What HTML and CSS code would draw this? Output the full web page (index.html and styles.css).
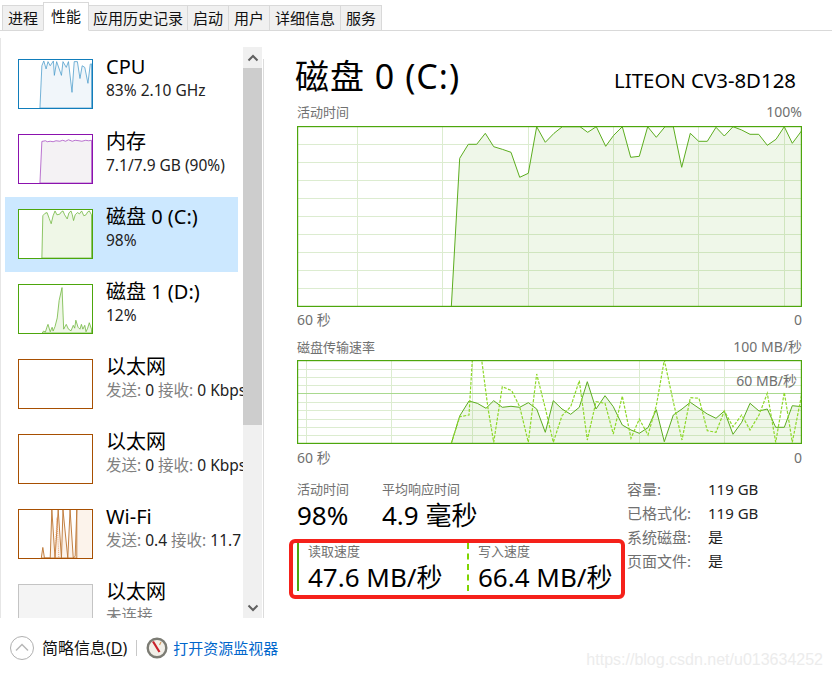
FILE: index.html
```html
<!DOCTYPE html>
<html lang="zh-CN">
<head>
    <meta charset="UTF-8">
    <title>任务管理器</title>
    <link rel="stylesheet" href="styles.css">
</head>
<body>
    <div class="tabs">
        <div class="tab">进程</div>
        <div class="tab active">性能</div>
        <div class="tab tab-wide">应用历史记录</div>
        <div class="tab">启动</div>
        <div class="tab">用户</div>
        <div class="tab">详细信息</div>
        <div class="tab">服务</div>
    </div>

    <div class="content">
        <div class="sidebar">
            <div class="list">
                <div class="item">
                    <svg class="thumb cpu" viewBox="0 0 75 50"><polygon points="21.3,50 23.3,6 25.3,1 27.7,9.3 29.7,1.7 32,6 35.3,1 36.3,16 38.7,1.7 43.7,16 45.3,1.7 48.7,7.7 51,1.7 54.7,33.7 57,1.7 60.3,1.7 63,19.3 65.3,6 68,7.7 71.3,24.3 73.7,4.3 75,4 75,50"/></svg>
                    <div class="item-text"><div class="item-name">CPU</div><div class="item-sub">83% 2.10 GHz</div></div>
                </div>
                <div class="item">
                    <svg class="thumb mem" viewBox="0 0 75 50"><polygon points="21.3,50 23.3,6.7 27,6 29,7 32,6.5 35,7 38,6 42,6.5 45,5.5 48,6.5 51,5 55,6.5 58,5.5 62,6 65,6.5 69,5.5 72,6 75,5.5 75,50"/></svg>
                    <div class="item-text"><div class="item-name">内存</div><div class="item-sub">7.1/7.9 GB (90%)</div></div>
                </div>
                <div class="item selected">
                    <svg class="thumb disk" viewBox="0 0 75 50"><polygon points="23.3,50 24.3,6 26.5,3.5 28.7,2.7 31,9 33,14.3 35,6 37,1 39,5 42,4.3 43.5,2 45.3,1 47,5 49.7,9.3 51.5,3 53.7,1 55,5 56.3,11 58,5 60.3,2.7 62.5,4 64.7,1 67,6 69.3,5 71,2 72.7,1 75,5 75,50"/></svg>
                    <div class="item-text"><div class="item-name">磁盘 0 (C:)</div><div class="item-sub">98%</div></div>
                </div>
                <div class="item">
                    <svg class="thumb disk" viewBox="0 0 75 50"><polygon points="23.7,50 25,48 27,49 28.5,44 29.7,41 32,48.7 34,44 35,48 37,43.3 39.3,34.3 41.3,16 44.3,2.7 46,46 48.7,41 51,46 53.7,47.7 56,42 57.5,45 58.7,36.7 61,44 63,46 64.5,41 66,46 68,42 69.3,48.7 71,45 72.7,39.3 75,46 75,50"/></svg>
                    <div class="item-text"><div class="item-name">磁盘 1 (D:)</div><div class="item-sub">12%</div></div>
                </div>
                <div class="item">
                    <svg class="thumb net" viewBox="0 0 75 50"></svg>
                    <div class="item-text"><div class="item-name">以太网</div><div class="item-sub"><span class="gray">发送:</span> 0 <span class="gray">接收:</span> 0 Kbps</div></div>
                </div>
                <div class="item">
                    <svg class="thumb net" viewBox="0 0 75 50"></svg>
                    <div class="item-text"><div class="item-name">以太网</div><div class="item-sub"><span class="gray">发送:</span> 0 <span class="gray">接收:</span> 0 Kbps</div></div>
                </div>
                <div class="item">
                    <svg class="thumb net" viewBox="0 0 75 50">
                        <rect x="59.7" y="0" width="15.3" height="50" class="wifi-bg"/>
                        <polygon points="22.7,50 24.3,39 26,50 32,50 33.7,0 37,50 40.3,0 43.7,50 45.3,0 50.3,50 52.7,0 56,50 58,48 59.7,0 59.7,50"/>
                        <polyline class="net-dash" points="37,50 39,8 41,50"/>
                    </svg>
                    <div class="item-text"><div class="item-name">Wi-Fi</div><div class="item-sub"><span class="gray">发送:</span> 0.4 <span class="gray">接收:</span> 11.7 Mbps</div></div>
                </div>
                <div class="item">
                    <svg class="thumb off" viewBox="0 0 75 50"></svg>
                    <div class="item-text"><div class="item-name">以太网</div><div class="item-sub gray">未连接</div></div>
                </div>
            </div>
            <div class="scrollbar">
                <div class="scroll-btn"><svg width="12" height="8" viewBox="0 0 12 8"><path d="M1.5 6.5 L6 2 L10.5 6.5" class="scroll-arrow"/></svg></div>
                <div class="scroll-thumb"></div>
                <div class="scroll-rest"></div>
                <div class="scroll-btn"><svg width="12" height="8" viewBox="0 0 12 8"><path d="M1.5 1.5 L6 6 L10.5 1.5" class="scroll-arrow"/></svg></div>
            </div>
            <div class="divider"></div>
        </div>

        <div class="main">
            <div class="header">
                <div class="title">磁盘 0 (C:)</div>
                <div class="model">LITEON CV3-8D128</div>
            </div>

            <div class="chart-label"><span>活动时间</span><span class="chart-end">100%</span></div>
            <svg class="chart chart-big" viewBox="297 126 505 181">
                <path class="grid" d="M297 144.5H802M297 162.5H802M297 180.5H802M297 198.5H802M297 216.5H802M297 234.5H802M297 252.5H802M297 270.5H802M297 288.5H802M357.5 126V307M442.5 126V307M528.5 126V307M613.5 126V307M698.5 126V307M784.5 126V307"/>
                <polygon class="area" points="451.3,307 459.7,158.3 468.3,144.3 476.7,144.3 485.3,133.3 493.7,146.7 502.3,149.3 511,152.3 519.7,177.3 528.3,173.3 536.7,126.7 545.3,142.3 554,133.3 562.3,126.7 580,126.7 587.7,132.3 596.3,126.7 605.7,146.3 613.7,135.3 622.3,126.7 630.7,157.3 639.3,156.3 647.7,126.7 656.3,137.3 665,126.7 673.3,126.7 681.7,167.3 690.3,133.3 698.7,141.3 707.3,141.3 716,127.3 724.3,136 733,126.7 741.7,130 750,134.3 758.7,134.3 767.3,145.3 776,139.3 784.3,126.7 792.3,143.3 801.7,130.7 801.7,307"/>
                <rect class="frame" x="297.5" y="126.5" width="504" height="180"/>
            </svg>
            <div class="chart-caption"><span>60 秒</span><span>0</span></div>

            <div class="chart-label second"><span>磁盘传输速率</span><span class="chart-end">100 MB/秒</span></div>
            <div class="chart-wrap">
                <svg class="chart chart-small" viewBox="297 360 505 84">
                    <path class="grid" d="M297 369.5H802M297 377.5H802M297 385.5H802M297 402.5H802M297 410.5H802M297 419.5H802M297 427.5H802M297 435.5H802M306.5 360V444M391.5 360V444M472.5 360V444M553.5 360V444M639.5 360V444M724.5 360V444"/>
                    <path class="grid-strong" d="M297 393.5H802"/>
                    <polygon class="area" points="451.3,443.5 459.7,416 469,401 477.3,403.3 486,408.3 493.7,400.7 502.3,407.3 511,406.3 519.7,407.3 528.3,402.7 536.7,409 545.3,432.3 553.3,400.7 562,409 570.7,414.3 579.3,407.3 587.3,381.7 596,409 605,395.7 613.3,406.7 622.3,425 631,430 639.3,433.3 648,427.7 656.3,409.7 664.3,441.7 673.3,415 682,409 690.3,402.3 699,408.3 707.3,414 716,418.3 724.3,411 733,434.3 741.7,422.3 750,403.3 759,411 767.3,409 775.7,427.3 784.3,427.3 792.3,405.7 801.7,406.7 801.7,443.5"/>
                    <polyline class="write-line" points="451.3,443.3 459.7,416.7 469,415 472.3,360 481.7,360 488,408.3 493.7,442.3 502.3,386.7 511.7,390.7 519.7,406.7 528.3,442.3 536.7,374 545.3,408.3 553.3,442.3 562,415.7 570.7,406.7 579.3,380.7 587.3,440 596,401.7 605,403.3 613.3,434 622.3,396 631,438.3 639.3,419 648,435 656.3,405.7 664.3,360 673.3,401.7 682,440 690.3,397.7 699,398.3 707.3,430.7 716,432.3 724.3,411 733,426.7 741.7,415 750,430 759,415 767.3,393.3 775.7,442.3 784.3,392.3 792.3,442.3 801.7,394.3"/>
                    <rect class="frame" x="297.5" y="360.5" width="504" height="83"/>
                </svg>
                <div class="chart-mark">60 MB/秒</div>
            </div>
            <div class="chart-caption low"><span>60 秒</span><span>0</span></div>

            <div class="stats">
                <div class="stats-left">
                    <div class="stat-row">
                        <div class="stat stat-active"><div class="stat-label">活动时间</div><div class="stat-value">98%</div></div>
                        <div class="stat"><div class="stat-label">平均响应时间</div><div class="stat-value">4.9 毫秒</div></div>
                    </div>
                    <div class="stat-row speeds">
                        <div class="stat speed read"><div class="stat-label">读取速度</div><div class="stat-value">47.6 MB/秒</div></div>
                        <div class="stat speed write"><div class="stat-label">写入速度</div><div class="stat-value">66.4 MB/秒</div></div>
                        <div class="red-box"></div>
                    </div>
                </div>
                <div class="stats-right">
                    <div class="prop"><span class="prop-key">容量:</span><span>119 GB</span></div>
                    <div class="prop"><span class="prop-key">已格式化:</span><span>119 GB</span></div>
                    <div class="prop"><span class="prop-key">系统磁盘:</span><span>是</span></div>
                    <div class="prop"><span class="prop-key">页面文件:</span><span>是</span></div>
                </div>
            </div>
        </div>
    </div>

    <div class="footer">
        <svg class="less-icon" width="26" height="26" viewBox="0 0 26 26">
            <circle cx="13" cy="13" r="11.5" class="less-ring"/>
            <path d="M7 15.5 L13 9.5 L19 15.5" class="less-arrow"/>
        </svg>
        <div class="less-text">简略信息(<u>D</u>)</div>
        <div class="sep"></div>
        <svg class="mon-icon" width="22" height="22" viewBox="0 0 22 22">
            <circle cx="11" cy="11" r="9.3" class="mon-ring"/>
            <path d="M7 4.5 L13.5 15" class="mon-needle"/>
            <path d="M15 5 L13.5 8" class="mon-tick"/>
        </svg>
        <div class="mon-link">打开资源监视器</div>
        <div class="watermark">https://blog.csdn.net/u013634252</div>
    </div>
</body>
</html>
```

FILE: styles.css
```css
* {
    box-sizing: border-box;
}

html, body {
    margin: 0;
    height: 678px;
    overflow: hidden;
}

body {
    font-family: "Noto Sans", "Noto Sans CJK SC", sans-serif;
    background-color: #fff;
    color: #000;
    position: relative;
}

/* tab strip */
.tabs {
    display: flex;
    align-items: flex-end;
    height: 31px;
    padding-left: 2px;
    border-bottom: 1px solid #d9d9d9;
}
.tab {
    height: 26px;
    margin-bottom: -1px;
    margin-right: -1px;
    padding: 0 5px;
    font-size: 15px;
    line-height: 24px;
    color: #111;
    background-color: #f0f0f0;
    border: 1px solid #d9d9d9;
}
.tab-wide {
    padding: 0 4px;
}
.tab.active {
    height: 29px;
    line-height: 26px;
    background-color: #fff;
    border-bottom-color: #fff;
    position: relative;
    padding: 0 7px;
}

.content {
    display: flex;
    height: 587px;
}

/* left list */
.sidebar {
    display: flex;
    width: 264px;
    margin-top: 7px;
    border-left: 1px solid #e6e6e6;
}
.list {
    width: 242px;
    padding: 9px 0 0 4px;
    overflow: hidden;
}
.item {
    display: flex;
    width: 233px;
    height: 75px;
    padding: 12px 0 0 13px;
}
.item.selected {
    background-color: #cce8ff;
}
.thumb {
    flex: none;
    width: 75px;
    height: 50px;
    background-color: #fff;
    border: 1px solid;
    overflow: hidden;
}
.thumb polygon {
    stroke-width: 0.8;
}
.cpu { border-color: #117dbb; }
.cpu polygon { fill: #f1f6fa; stroke: #4a9ccb; }
.mem { border-color: #8b12ae; }
.mem polygon { fill: #f4f2f4; stroke: #a64bc2; }
.disk { border-color: #4da60c; }
.disk polygon { fill: #eff7e7; stroke: #6db53a; }
.selected .disk { background-color: #fff; }
.net { border-color: #a74f01; }
.net polygon { fill: #fcf3eb; stroke: #bf7a3a; stroke-width: 1; }
.wifi-bg { fill: #fcf3eb; }
.net-dash { fill: none; stroke: #e08a50; stroke-width: 0.8; stroke-dasharray: 1 1; }
.off { border-color: #c4c4c4; background-color: #f4f4f4; }

.item-text {
    margin-left: 13px;
    white-space: nowrap;
}
.item-name {
    font-size: 20px;
    line-height: 24px;
    margin-top: -4px;
}
.item-sub {
    font-size: 15.5px;
    line-height: 22px;
    color: #222;
}
.gray {
    color: #808080;
}

.scrollbar {
    display: flex;
    flex-direction: column;
    width: 19px;
    margin-left: 0;
    margin-top: 9px;
    background-color: #f0f0f0;
}
.scroll-btn {
    flex: none;
    height: 21px;
    display: flex;
    align-items: center;
    justify-content: center;
}
.scroll-arrow {
    fill: none;
    stroke: #606060;
    stroke-width: 2;
}
.scroll-thumb {
    flex: none;
    height: 357px;
    background-color: #cdcdcd;
}
.scroll-rest {
    flex: 1;
}
.divider {
    width: 1px;
    margin-top: 21px;
    margin-left: 1px;
    background-color: #dcdcdc;
}

/* right panel */
.main {
    width: 505px;
    margin-left: 33px;
}
.header {
    display: flex;
    justify-content: space-between;
    align-items: center;
    height: 40px;
    margin-top: 25px;
    margin-bottom: 7px;
}
.title {
    font-size: 34px;
    letter-spacing: 1px;
    line-height: 40px;
    margin-left: -2px;
}
.model {
    font-size: 20.4px;
    line-height: 24px;
    margin-right: 6px;
    margin-top: 8px;
}
.chart-label, .chart-caption {
    display: flex;
    justify-content: space-between;
    font-size: 13px;
    line-height: 18px;
    color: #707070;
}
.chart-end {
    font-size: 14px;
}
.chart-label {
    margin-bottom: 5px;
}
.chart-label.second {
    margin-top: 9px;
    margin-bottom: 4px;
}
.chart-caption {
    margin-top: 4px;
    font-size: 14px;
}
.chart-caption.low {
    margin-top: 5px;
}
.chart {
    display: block;
    width: 505px;
}
.chart-big { height: 181px; }
.chart-small { height: 84px; }
.chart-wrap {
    position: relative;
}
.chart-mark {
    position: absolute;
    top: 12px;
    right: 5px;
    font-size: 14px;
    line-height: 18px;
    color: #707070;
}
.grid {
    fill: none;
    stroke: #dcecd0;
    stroke-width: 1;
}
.grid-strong {
    fill: none;
    stroke: #a9d98f;
    stroke-width: 1;
}
.area {
    fill: rgba(77, 166, 12, 0.09);
    stroke: #5cad1f;
    stroke-width: 1;
}
.write-line {
    fill: none;
    stroke: #8ed82a;
    stroke-width: 1.2;
    stroke-dasharray: 3 1.5;
}
.frame {
    fill: none;
    stroke: #4da60c;
    stroke-width: 1.4;
}

/* numbers under the charts */
.stats {
    display: flex;
    margin-top: 13px;
}
.stats-left {
    flex: none;
    width: 330px;
}
.stat-row {
    display: flex;
}
.stat-active {
    width: 85px;
}
.stat-label {
    font-size: 13px;
    line-height: 18px;
    color: #707070;
}
.stat-value {
    font-size: 26px;
    line-height: 32px;
    margin-top: 1px;
    color: #000;
}
.speeds {
    position: relative;
    margin-top: 11px;
}
.speed {
    flex: none;
    width: 170px;
    height: 48px;
    padding-left: 9px;
    margin-top: 1px;
    white-space: nowrap;
}
.speed .stat-label {
    margin-top: -1px;
}
.read {
    border-left: 2px solid #4da60c;
}
.write {
    border-left: 2px dashed #7fd400;
}
.red-box {
    position: absolute;
    left: -8px;
    top: -3px;
    width: 336px;
    height: 60px;
    border: 4px solid #f5211a;
    border-radius: 6px;
}
.stats-right {
    margin-top: -3px;
}
.prop {
    display: flex;
    font-size: 15px;
    line-height: 24px;
    color: #222;
}
.prop-key {
    width: 81px;
    color: #707070;
}

/* bottom bar */
.footer {
    display: flex;
    align-items: center;
    height: 60px;
    padding-left: 9px;
}
.less-ring {
    fill: #fff;
    stroke: #b0b0b0;
    stroke-width: 1;
}
.less-arrow {
    fill: none;
    stroke: #b8b8b8;
    stroke-width: 1.5;
}
.less-text {
    margin-left: 7px;
    font-size: 16px;
    line-height: 20px;
    color: #111;
}
.sep {
    width: 1px;
    height: 16px;
    margin-left: 9px;
    background-color: #c8c8c8;
}
.mon-icon {
    margin-left: 9px;
}
.mon-ring {
    fill: #f2efe8;
    stroke: #7c7c74;
    stroke-width: 2.4;
}
.mon-needle {
    stroke: #c8202a;
    stroke-width: 2.2;
}
.mon-tick {
    stroke: #d49a60;
    stroke-width: 1.2;
}
.mon-link {
    margin-left: 5px;
    font-size: 15px;
    line-height: 20px;
    color: #0066cc;
}
.watermark {
    position: absolute;
    right: 9px;
    bottom: 8px;
    font-family: "Liberation Sans", sans-serif;
    font-size: 16px;
    line-height: 20px;
    color: #ececec;
}
```
